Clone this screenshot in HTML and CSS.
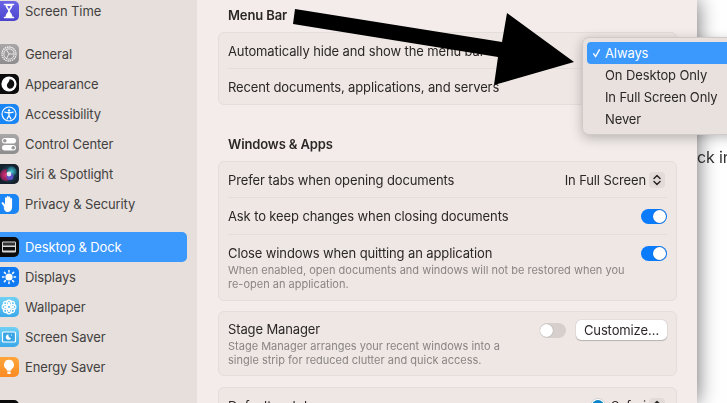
FILE: index.html
```html
<!DOCTYPE html>
<html lang="en">
<head>
<meta charset="utf-8">
<title>Desktop &amp; Dock</title>
<link rel="stylesheet" href="styles.css">
</head>
<body>
<div class="window">
  <nav class="sidebar">
    <div class="group">
      <div class="item"><span class="ico ico-time"><svg viewBox="0 0 20 20"><path d="M5.500 3.500h9M5.500 16.500h9" stroke="#fff" stroke-width="1.600" stroke-linecap="round"/><path d="M6.500 4c0 3 2.300 4.500 2.800 6-.5 1.500-2.800 3-2.800 6h7c0-3-2.300-4.500-2.800-6 .5-1.500 2.800-3 2.800-6z" fill="#fff"/><path d="M8.300 5h3.400c-.3 1.300-1.200 2.400-1.700 3.200-.5-.8-1.400-1.900-1.700-3.200z" fill="#6a66e0"/></svg></span>Screen Time</div>
    </div>
    <div class="group">
      <div class="item"><span class="ico ico-gen"><svg viewBox="0 0 20 20"><circle cx="10" cy="10" r="7" fill="none" stroke="#f1f1f1" stroke-width="1.400" stroke-dasharray="1.500 .7"/><circle cx="10" cy="10" r="5.200" fill="none" stroke="#eee" stroke-width=".9"/><path d="M10 10h5M10 10L7.500 5.700M10 10l-2.500 4.300" stroke="#eee" stroke-width=".9"/></svg></span>General</div>
      <div class="item"><span class="ico ico-app"><svg viewBox="0 0 20 20"><circle cx="10" cy="10" r="7.600" fill="#fff"/><path d="M10.500 5.200a4.800 4.800 0 0 1 0 9.600c-2.200-.8-3.200-2.800-2.300-4.800s2.500-2.800 2.300-4.800z" fill="#111"/></svg></span>Appearance</div>
      <div class="item"><span class="ico ico-acc"><svg viewBox="0 0 20 20"><circle cx="10" cy="10" r="7" fill="none" stroke="#fff" stroke-width="1.200"/><circle cx="10" cy="6.400" r="1.200" fill="#fff"/><path d="M5.800 8.200c2.800.7 5.600.7 8.400 0M10 9v2.800M10 11.500l-2 3.500M10 11.500l2 3.500" fill="none" stroke="#fff" stroke-width="1.300" stroke-linecap="round"/></svg></span>Accessibility</div>
      <div class="item"><span class="ico ico-gen"><svg viewBox="0 0 20 20"><rect x="3" y="4" width="14" height="5.500" rx="2.750" fill="#fff"/><circle cx="5.800" cy="6.750" r="1.800" fill="#999"/><rect x="3" y="11" width="14" height="5.500" rx="2.750" fill="#fff"/><circle cx="14.200" cy="13.750" r="1.800" fill="#999"/></svg></span>Control Center</div>
      <div class="item"><span class="ico ico-siri"><svg viewBox="0 0 20 20"><defs><radialGradient id="pink"><stop offset="0" stop-color="#e0357a"/><stop offset="1" stop-color="#7a1f50"/></radialGradient><radialGradient id="teal"><stop offset="0" stop-color="#4ac6d4"/><stop offset="1" stop-color="#1a5a6c"/></radialGradient></defs><circle cx="10" cy="10" r="8.500" fill="#173244"/><circle cx="7" cy="11" r="6" fill="url(#pink)"/><circle cx="12.500" cy="7.500" r="5" fill="url(#teal)"/><circle cx="11" cy="12.500" r="3.500" fill="#5f52c8"/><circle cx="10" cy="10" r="2.400" fill="#dfe9f4"/></svg></span>Siri &amp; Spotlight</div>
      <div class="item"><span class="ico ico-acc"><svg viewBox="0 0 20 20"><path d="M5.500 13.500L2.700 9.600c-.7-1.200 1-2 1.700-1L6 10.600V4.200c0-1.200 1.800-1.200 1.800 0V9V2.900c0-1.200 1.800-1.200 1.800 0V9V3.500c0-1.200 1.800-1.200 1.800 0V9.500V5c0-1.200 1.700-1.200 1.700 0v8c0 3.200-2 5-4.500 5-2.200 0-3.200-1.500-4.100-4.500z" fill="#fff"/></svg></span>Privacy &amp; Security</div>
    </div>
    <div class="group">
      <div class="item selected"><span class="ico ico-app"><svg viewBox="0 0 20 20"><rect x="3" y="4.500" width="14" height="11" rx="1.300" fill="#d8d8d8"/><rect x="4" y="5.500" width="12" height="3" fill="#333"/><rect x="4" y="10" width="12" height="3.500" fill="#111"/></svg></span>Desktop &amp; Dock</div>
      <div class="item"><span class="ico ico-disp"><svg viewBox="0 0 20 20"><circle cx="10" cy="10" r="3.600" fill="#fff"/><path d="M10 3.500v1.500M10 15v1.500M3.500 10H5M15 10h1.500M5.400 5.400l1 1M13.600 13.600l1 1M5.400 14.600l1-1M13.600 6.400l1-1" stroke="#fff" stroke-width="1.500" stroke-linecap="round"/></svg></span>Displays</div>
      <div class="item"><span class="ico ico-wall"><svg viewBox="0 0 20 20"><g fill="none" stroke="#fff" stroke-width="1.100"><circle cx="10" cy="5.700" r="2.600"/><circle cx="10" cy="14.300" r="2.600"/><circle cx="5.700" cy="10" r="2.600"/><circle cx="14.300" cy="10" r="2.600"/><circle cx="7" cy="7" r="2.600"/><circle cx="13" cy="7" r="2.600"/><circle cx="7" cy="13" r="2.600"/><circle cx="13" cy="13" r="2.600"/></g></svg></span>Wallpaper</div>
      <div class="item"><span class="ico ico-wall"><svg viewBox="0 0 20 20"><rect x="3.500" y="5" width="13" height="10" rx="1" fill="#3aa5e4" stroke="#fff" stroke-width="1.200"/><path d="M9.500 7.200a2.800 2.800 0 1 0 2.600 4 3 3 0 0 1-2.600-4z" fill="#fff"/><circle cx="12.500" cy="8" r=".6" fill="#fff"/></svg></span>Screen Saver</div>
      <div class="item"><span class="ico ico-energy"><svg viewBox="0 0 20 20"><path d="M10 2.800a5 5 0 0 0-3 9c.7.600.9 1.300 1 2h4c.1-.7.300-1.400 1-2a5 5 0 0 0-3-9z" fill="#fff"/><rect x="8.200" y="14.500" width="3.600" height="2.600" rx="1" fill="#fff"/></svg></span>Energy Saver</div>
    </div>
    <div class="group">
      <div class="item"><span class="ico ico-app"></span></div>
    </div>
  </nav>

  <main class="main">
    <h2 class="heading first">Menu Bar</h2>
    <section class="card">
      <div class="row"><span>Automatically hide and show the menu bar</span></div>
      <div class="row short"><span>Recent documents, applications, and servers</span></div>
    </section>

    <h2 class="heading">Windows &amp; Apps</h2>
    <section class="card">
      <div class="row">
        <span>Prefer tabs when opening documents</span>
        <span class="control">In Full Screen
          <span class="stepper"><svg viewBox="0 0 16 16"><path d="M5 6.500L8 3.500l3 3M5 9.500l3 3 3-3" fill="none" stroke="#2b2727" stroke-width="1.500" stroke-linecap="round" stroke-linejoin="round"/></svg></span>
        </span>
      </div>
      <div class="row">
        <span>Ask to keep changes when closing documents</span>
        <span class="toggle on"></span>
      </div>
      <div class="row tall">
        <div class="text">
          <div>Close windows when quitting an application</div>
          <p class="sub">When enabled, open documents and windows will not be restored when you re-open an application.</p>
        </div>
        <span class="toggle on"></span>
      </div>
    </section>

    <section class="card spaced">
      <div class="row tall stage">
        <div class="text">
          <div>Stage Manager</div>
          <p class="sub">Stage Manager arranges your recent windows into a single strip for reduced clutter and quick access.</p>
        </div>
        <span class="control wide"><span class="toggle off"></span><button class="btn" type="button">Customize…</button></span>
      </div>
    </section>

    <section class="card last">
      <div class="row">
        <span>Default web browser</span>
        <span class="control">
          <svg class="safari" viewBox="0 0 16 16"><circle cx="8" cy="8" r="7.500" fill="#fff" stroke="#bbb" stroke-width=".6"/><circle cx="8" cy="8" r="6" fill="#0a84c8"/></svg>Safari
          <span class="stepper"><svg viewBox="0 0 16 16"><path d="M5 6.500L8 3.500l3 3M5 9.500l3 3 3-3" fill="none" stroke="#2b2727" stroke-width="1.500" stroke-linecap="round" stroke-linejoin="round"/></svg></span>
        </span>
      </div>
    </section>
  </main>

  <aside class="beyond">ck in</aside>

  <div class="popup">
    <div class="opt active"><svg class="check" viewBox="0 0 10 10"><path d="M1.500 5.500L4 9 8.500 1" fill="none" stroke="#fff" stroke-width="1.500"/></svg>Always</div>
    <div class="opt">On Desktop Only</div>
    <div class="opt">In Full Screen Only</div>
    <div class="opt">Never</div>
  </div>

  <svg class="arrow" viewBox="0 0 727 403"><polygon points="295,9 502,42 507,13 574,62 494,85 498,57 293,24" fill="#000"/></svg>
</div>
</body>
</html>
```

FILE: styles.css
```css
* { box-sizing: border-box; }
html, body { margin: 0; height: 100%; overflow: hidden; background: #fff; }
body { font-family: Inter, "Liberation Sans", sans-serif; font-size: 13px; letter-spacing: -.12px; color: #2b2727; }

.window { position: relative; display: flex; width: 727px; height: 403px; overflow: hidden; filter: blur(.3px); }

.sidebar { flex: 0 0 197px; background: #e6dfdc; padding: 0 10px 0 0; color: #433f3f; overflow: hidden; height: 403px; }
.group { margin-bottom: 13px; }
.group:first-child { margin-top: -4px; }
.item { display: flex; align-items: center; gap: 6px; height: 30px; border-radius: 0 5px 5px 0; }
.item.selected { background: #3b98fc; color: #fff; }
.ico { flex: 0 0 19px; width: 19px; height: 20px; border-radius: 0 5px 5px 0; display: block; overflow: hidden; }
.ico svg { display: block; width: 20px; height: 20px; margin-left: -1px; }
.ico-time { background: linear-gradient(#6a66e6, #4a44cc); }
.ico-gen { background: linear-gradient(#a9a7a7, #8e8c8c); }
.ico-app { background: #0b0b0b; }
.ico-acc { background: #1a85f5; }
.ico-siri { background: #15222e; }
.ico-disp { background: #0f7af2; }
.ico-wall { background: linear-gradient(#6fd0f5, #3aa9ea); }
.ico-energy { background: linear-gradient(#ffa63a, #fb8a24); }

.main { flex: 0 0 500px; position: relative; z-index: 1; background: #f3ecea; padding: 0 20px 0 21px; box-shadow: 0 0 20px rgba(0,0,0,.6); clip-path: inset(0 -30px 0 0); height: 403px; overflow: hidden; }
.heading { margin: 31px 0 9px 10px; font-size: 13px; line-height: 16px; font-weight: 600; color: #2b2727; }
.heading.first { margin-top: 7px; }
.card { background: #eee7e4; border: 1px solid #e4dedb; border-radius: 6px; padding: 0 9px; }
.card.spaced { margin-top: 10px; }
.card.last { margin-top: 11px; }
.row { display: flex; justify-content: space-between; align-items: center; min-height: 37px; border-top: 1px solid #e4dedb; }
.row:first-child { border-top: 0; min-height: 35px; }
.row.short { min-height: 36px; }
.row.tall { align-items: flex-start; padding: 10px 0 9px; }
.row.stage { padding: 9px 0 8px; }
.row.tall > .toggle { margin-top: 1px; }
.text { flex: 1; min-width: 0; line-height: 16px; }
.sub { margin: 2px 0 0; width: 410px; font-size: 11px; line-height: 14px; letter-spacing: 0; color: #8a8583; }
.row.stage .sub { width: 290px; }
.control { display: flex; align-items: center; gap: 3px; padding-right: 2px; }
.control.wide { gap: 10px; padding-right: 0; margin-top: -1px; }
.stepper { display: block; width: 16px; height: 16px; border-radius: 4px; background: #e2dbd8; }
.stepper svg { display: block; width: 16px; height: 16px; }
.safari { width: 16px; height: 16px; margin-right: 2px; }
.toggle { display: block; position: relative; width: 26px; height: 15px; border-radius: 8px; flex: none; }
.toggle::after { content: ""; position: absolute; top: 1px; width: 13px; height: 13px; border-radius: 50%; background: #fff; box-shadow: 0 0 1px rgba(0,0,0,.4); }
.toggle.on { background: #0a7bfb; }
.toggle.on::after { right: 1px; }
.toggle.off { background: #d6cfcc; }
.toggle.off::after { left: 0; }
.btn { width: 91px; height: 20px; padding: 0; border: 0; border-radius: 5px; background: #fff; box-shadow: 0 0 1px rgba(0,0,0,.35), 0 1px 1px rgba(0,0,0,.2); font: inherit; letter-spacing: inherit; color: #2b2727; }

.beyond { flex: 1; padding-top: 148px; font-size: 16px; line-height: 18px; color: #333; white-space: nowrap; overflow: hidden; }

.popup { position: absolute; z-index: 3; left: 582px; top: 37px; width: 160px; height: 98px; padding: 4px; background: #e8e1de; border: 1px solid #d0cac7; border-radius: 7px; box-shadow: 0 3px 12px rgba(0,0,0,.25); }
.opt { position: relative; height: 22px; line-height: 22px; padding-left: 18px; border-radius: 4px; color: #2b2727; }
.opt.active { background: #3b98fc; color: #fff; }
.check { position: absolute; left: 5px; top: 6px; width: 9px; height: 10px; }

.arrow { position: absolute; z-index: 4; left: 0; top: 0; width: 727px; height: 403px; pointer-events: none; }
```
